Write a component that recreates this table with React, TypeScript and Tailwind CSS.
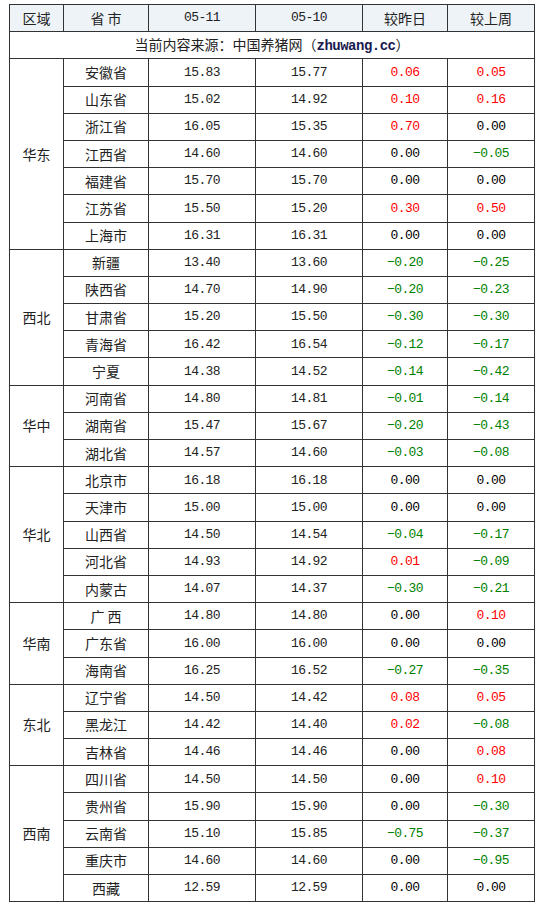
type Row = { city: string; a: string; b: string; d: string; w: string }

const groups: { region: string; rows: Row[] }[] = [
  {
    region: "华东",
    rows: [
      { city: "安徽省", a: "15.83", b: "15.77", d: "0.06", w: "0.05" },
      { city: "山东省", a: "15.02", b: "14.92", d: "0.10", w: "0.16" },
      { city: "浙江省", a: "16.05", b: "15.35", d: "0.70", w: "0.00" },
      { city: "江西省", a: "14.60", b: "14.60", d: "0.00", w: "-0.05" },
      { city: "福建省", a: "15.70", b: "15.70", d: "0.00", w: "0.00" },
      { city: "江苏省", a: "15.50", b: "15.20", d: "0.30", w: "0.50" },
      { city: "上海市", a: "16.31", b: "16.31", d: "0.00", w: "0.00" },
    ],
  },
  {
    region: "西北",
    rows: [
      { city: "新疆", a: "13.40", b: "13.60", d: "-0.20", w: "-0.25" },
      { city: "陕西省", a: "14.70", b: "14.90", d: "-0.20", w: "-0.23" },
      { city: "甘肃省", a: "15.20", b: "15.50", d: "-0.30", w: "-0.30" },
      { city: "青海省", a: "16.42", b: "16.54", d: "-0.12", w: "-0.17" },
      { city: "宁夏", a: "14.38", b: "14.52", d: "-0.14", w: "-0.42" },
    ],
  },
  {
    region: "华中",
    rows: [
      { city: "河南省", a: "14.80", b: "14.81", d: "-0.01", w: "-0.14" },
      { city: "湖南省", a: "15.47", b: "15.67", d: "-0.20", w: "-0.43" },
      { city: "湖北省", a: "14.57", b: "14.60", d: "-0.03", w: "-0.08" },
    ],
  },
  {
    region: "华北",
    rows: [
      { city: "北京市", a: "16.18", b: "16.18", d: "0.00", w: "0.00" },
      { city: "天津市", a: "15.00", b: "15.00", d: "0.00", w: "0.00" },
      { city: "山西省", a: "14.50", b: "14.54", d: "-0.04", w: "-0.17" },
      { city: "河北省", a: "14.93", b: "14.92", d: "0.01", w: "-0.09" },
      { city: "内蒙古", a: "14.07", b: "14.37", d: "-0.30", w: "-0.21" },
    ],
  },
  {
    region: "华南",
    rows: [
      { city: "广 西", a: "14.80", b: "14.80", d: "0.00", w: "0.10" },
      { city: "广东省", a: "16.00", b: "16.00", d: "0.00", w: "0.00" },
      { city: "海南省", a: "16.25", b: "16.52", d: "-0.27", w: "-0.35" },
    ],
  },
  {
    region: "东北",
    rows: [
      { city: "辽宁省", a: "14.50", b: "14.42", d: "0.08", w: "0.05" },
      { city: "黑龙江", a: "14.42", b: "14.40", d: "0.02", w: "-0.08" },
      { city: "吉林省", a: "14.46", b: "14.46", d: "0.00", w: "0.08" },
    ],
  },
  {
    region: "西南",
    rows: [
      { city: "四川省", a: "14.50", b: "14.50", d: "0.00", w: "0.10" },
      { city: "贵州省", a: "15.90", b: "15.90", d: "0.00", w: "-0.30" },
      { city: "云南省", a: "15.10", b: "15.85", d: "-0.75", w: "-0.37" },
      { city: "重庆市", a: "14.60", b: "14.60", d: "0.00", w: "-0.95" },
      { city: "西藏", a: "12.59", b: "12.59", d: "0.00", w: "0.00" },
    ],
  },
]

const cjk = "font-['SimSun','Noto_Sans_CJK_SC',sans-serif] text-[14px]"
const num = "font-['Liberation_Mono',monospace] text-[13px] tracking-[-0.6px]"
const cell = "border border-[#333] text-center h-[27.2px] p-0"

function Change({ v }: { v: string }) {
  const color = v.startsWith("-") ? "text-[#008000]" : v === "0.00" ? "text-black" : "text-[#ff0000]"
  return <td className={`${cell} ${num} ${color}`}>{v.replace("-", "−")}</td>
}

export default function App() {
  return (
    <div className="bg-white pt-[4px] pl-[9px] text-[#222]">
      <table className="table-fixed border-collapse w-[525px]">
        <colgroup>
          <col className="w-[54px]" />
          <col className="w-[85px]" />
          <col className="w-[107px]" />
          <col className="w-[107px]" />
          <col className="w-[85px]" />
          <col className="w-[87px]" />
        </colgroup>
        <thead>
          <tr className="bg-[#eef3f8]">
            <td className={`${cell} ${cjk}`}>区域</td>
            <td className={`${cell} ${cjk}`}>省 市</td>
            <td className={`${cell} ${num}`}>05-11</td>
            <td className={`${cell} ${num}`}>05-10</td>
            <td className={`${cell} ${cjk}`}>较昨日</td>
            <td className={`${cell} ${cjk}`}>较上周</td>
          </tr>
        </thead>
        <tbody>
          <tr>
            <td colSpan={6} className={`${cell} ${cjk}`}>
              当前内容来源：中国养猪网（
              <span className="font-['Liberation_Mono',monospace] font-bold text-[14px] text-[#1a1a50] tracking-[-0.5px]">
                zhuwang.cc
              </span>
              ）
            </td>
          </tr>
          {groups.map((g) =>
            g.rows.map((r, i) => (
              <tr key={g.region + r.city}>
                {i === 0 && (
                  <td rowSpan={g.rows.length} className={`${cell} ${cjk}`}>
                    {g.region}
                  </td>
                )}
                <td className={`${cell} ${cjk}`}>{r.city}</td>
                <td className={`${cell} ${num}`}>{r.a}</td>
                <td className={`${cell} ${num}`}>{r.b}</td>
                <Change v={r.d} />
                <Change v={r.w} />
              </tr>
            ))
          )}
        </tbody>
      </table>
    </div>
  )
}
